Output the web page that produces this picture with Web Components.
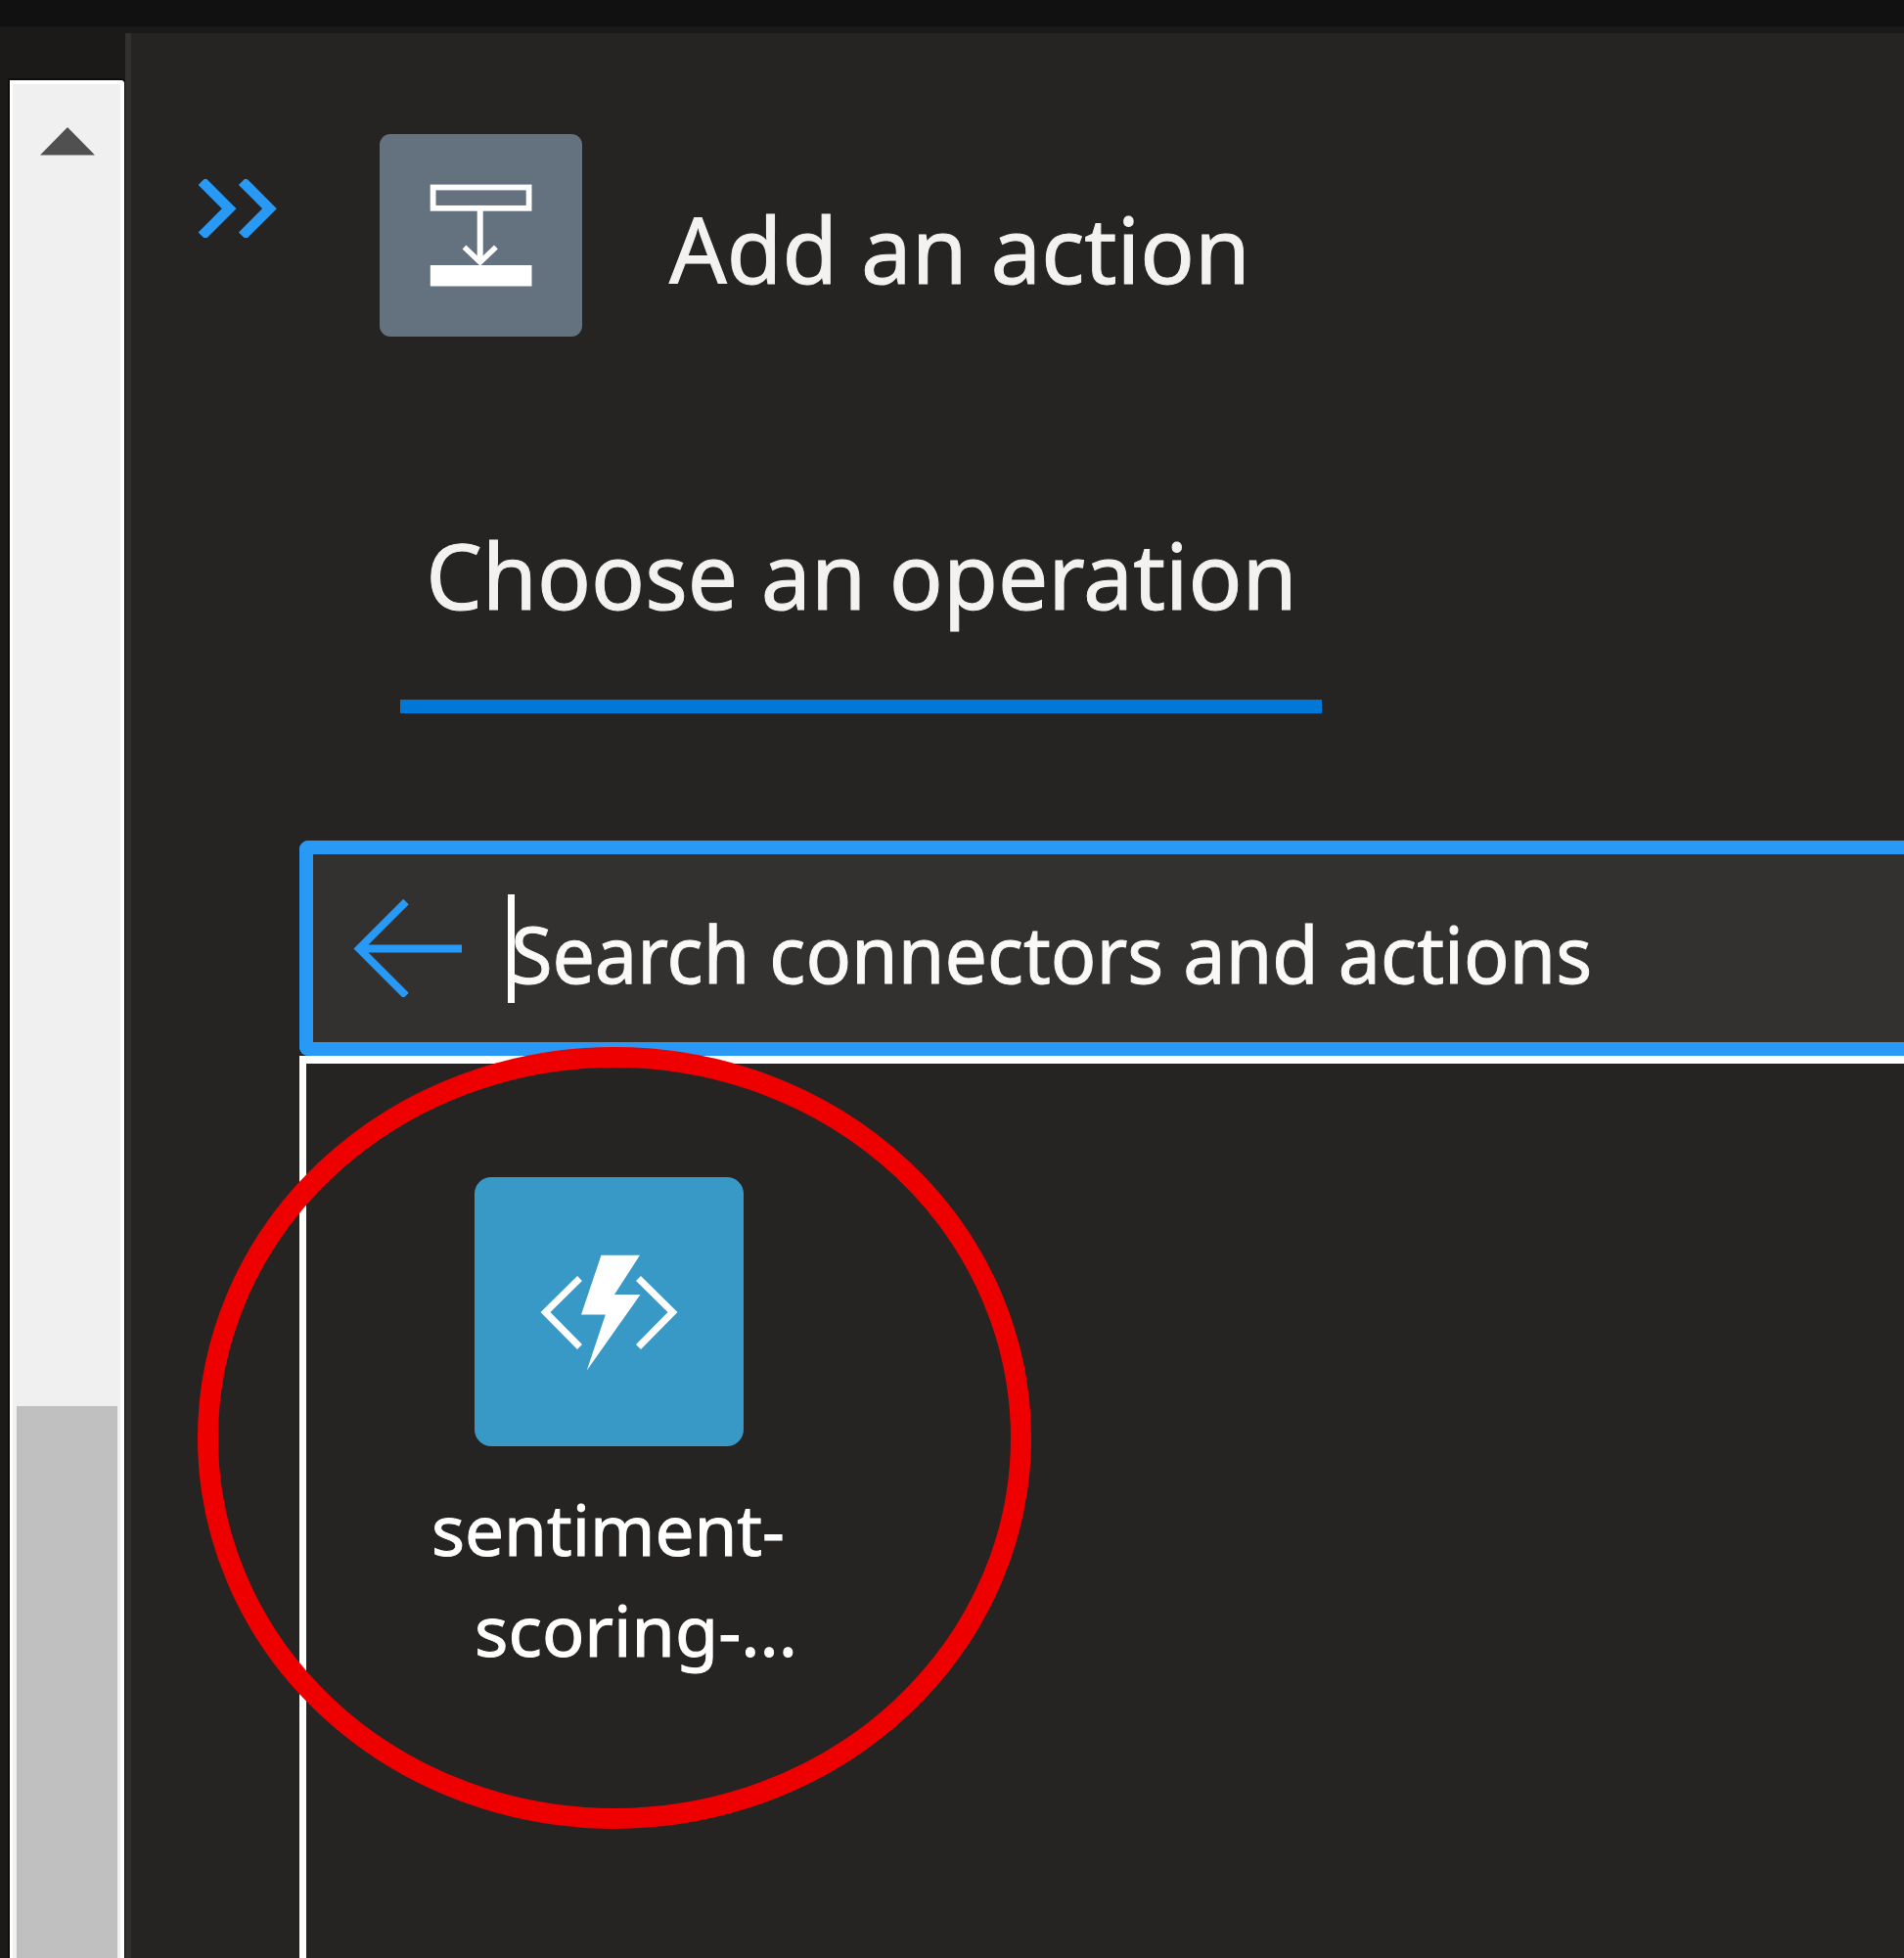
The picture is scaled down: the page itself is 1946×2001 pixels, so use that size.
<!DOCTYPE html>
<html lang="en">
<head>
<meta charset="utf-8">
<title>Add an action</title>
<style>
html,body{margin:0;height:100%;overflow:hidden;background:#1b1a19}
body{font-family:"Noto Sans","Open Sans",sans-serif;color:#f3f2f1}
</style>
</head>
<body>
<designer-shell>
  <scroll-track slot="rail"></scroll-track>
  <action-panel>
    <panel-header slot="header"><fit-text width="587">Add an action</fit-text></panel-header>
    <pivot-tab slot="tabs"><fit-text width="879">Choose an operation</fit-text></pivot-tab>
    <search-field slot="search"><fit-text width="1098">Search connectors and actions</fit-text></search-field>
    <result-list slot="results">
      <connector-tile>
        <fit-text slot="first" width="356">sentiment-</fit-text>
        <fit-text slot="second" width="322">scoring-...</fit-text>
      </connector-tile>
    </result-list>
  </action-panel>
</designer-shell>
<script>
function define(name, html, setup) {
  customElements.define(name, class extends HTMLElement {
    constructor() {
      super();
      this.attachShadow({mode: 'open'}).innerHTML = html;
    }
    connectedCallback() { if (setup) setup(this); }
  });
}

define('designer-shell', `<style>
  :host{display:flex;flex-direction:column;height:2001px;width:1946px;overflow:hidden;background:#1b1a19}
  header{height:27px;flex:none;background:#111}
  main{display:flex;flex:1;min-height:0}
</style><header></header><main><slot name="rail"></slot><slot></slot></main>`);

define('scroll-track', `<style>
  :host{display:flex;flex:none;width:128px;padding:55px 0 0 10px;box-sizing:border-box}
  .track{display:flex;flex-direction:column;align-items:center;width:117px;box-sizing:border-box;background:#f0f0f0;
    border:solid #fff;border-width:4px 4px 0 3px;border-top-right-radius:4px;box-shadow:0 0 0 2px #0e0d0c}
  svg{display:block;flex:none;width:58px;height:29px;margin:44px 0 0 1px}
  .thumb{width:103px;flex:1;margin-top:1278px;background:#c0c0c0}
</style><div class="track">
  <svg viewBox="0 0 58 29"><path d="M29 0L57 28.500H1Z" fill="#505050"/></svg>
  <div class="thumb"></div></div>`);

define('action-panel', `<style>
  :host{display:flex;flex-direction:column;flex:1;min-width:0;margin-top:7px;box-sizing:border-box;
    background:#252423;border-left:6px solid #323130;position:relative}
  .ring{position:absolute;left:68px;top:1036px;width:852px;height:799px}
</style><slot name="header"></slot><slot name="tabs"></slot><slot name="search"></slot><slot name="results"></slot><slot></slot>
<svg class="ring" viewBox="0 0 852 799"><ellipse cx="426" cy="399.500" rx="415.500" ry="389" fill="none" stroke="#ef0000" stroke-width="21"/></svg>`);

define('panel-header', `<style>
  :host{display:flex;align-items:flex-start;flex:none;height:310px;padding:103px 0 0 66px;box-sizing:border-box;font-size:94px;line-height:130px}
  .collapse{width:90px;height:60px;margin-top:46px;flex:none}
  .badge{width:207px;height:207px;margin-left:98px;border-radius:11px;background:#64717f;flex:none}
  .title{margin:52px 0 0 89px}
</style>
<svg class="collapse" viewBox="200 183 90 60" fill="none" stroke="#2899f5" stroke-width="10.400">
  <path d="M206.300 185.300L234.200 213.200L206.300 241.100M247.600 185.300L275.500 213.200L247.600 241.100"/></svg>
<svg class="badge" viewBox="388 137 207 207" fill="none" stroke="#fff">
  <rect x="442.600" y="191.500" width="98" height="21.300" stroke-width="5.800"/>
  <path d="M490.700 213V267" stroke-width="6"/><path d="M474.500 252.500L490.700 268L506.900 252.500" stroke-width="5.500"/>
  <rect x="439.800" y="271" width="103.700" height="21.500" fill="#fff" stroke="none"/></svg>
<div class="title"><slot></slot></div>`);

define('pivot-tab', `<style>
  :host{display:block;flex:none;width:942px;height:385px;margin:0 0 0 275px;padding-top:178px;box-sizing:border-box;font-size:94px;line-height:130px}
  .label{padding-left:31px;height:207px;box-sizing:border-box;border-bottom:14px solid #0078d7}
</style><div class="label"><slot></slot></div>`);

define('search-field', `<style>
  :host{display:flex;flex:none;height:220px;margin:130px 0 0 172px;border:14px solid #2899f5;border-right:0;border-radius:9px 0 0 9px;
    background:#323130;box-sizing:border-box;color:#faf9f8;font-size:80px;line-height:110px;position:relative}
  svg{width:113px;height:100px;margin:46px 0 0 41px;flex:none}
  .text{margin:46px 0 0 52px}
  .caret{position:absolute;left:199px;top:41px;width:7px;height:111px;background:#fff}
</style>
<svg viewBox="361 919 113 100" fill="none" stroke="#2899f5" stroke-width="7.800"><path d="M415 921.500L367 969.500L415 1017.500M367 969.500H472"/></svg>
<div class="text"><slot></slot></div><div class="caret"></div>`);

define('result-list', `<style>
  :host{display:block;flex:1;min-height:0;margin-left:172px;border:solid #fff;border-width:8px 0 0 7px;background:#252423}
</style><slot></slot>`);

define('connector-tile', `<style>
  :host{display:flex;flex-direction:column;width:380px;padding:116px 0 0 130px;font-size:71px;line-height:103px;color:#fff}
  svg{display:block;width:275px;height:275px;margin-left:41.500px;border-radius:17px;background:#3999c6}
  .first{margin:33px 0 0 1px}.second{margin-left:45px}
</style>
<svg viewBox="14.500 13 275 275" fill="none" stroke="#fff" stroke-width="7">
  <path d="M122 116.500L87 151L122 186.500M182 116.500L217 151L182 186.500"/>
  <path d="M144 92.700H183.500L157.500 133H184L129.300 210.500L148.300 153.500H123.500Z" fill="#fff" stroke="none"/></svg>
<div class="first"><slot name="first"></slot></div><div class="second"><slot name="second"></slot></div>`);

/* A single line of text condensed or widened to a given ink width.
   Registered last: the font size comes from the shadow trees around it. */
define('fit-text', `<style>
  :host{display:block;white-space:nowrap;width:max-content;transform-origin:0 0;-webkit-text-stroke:1px currentColor}
</style><slot></slot>`, el => {
  const cs = getComputedStyle(el);
  const ctx = document.createElement('canvas').getContext('2d');
  ctx.font = cs.fontSize + ' ' + cs.fontFamily;
  const m = ctx.measureText(el.textContent.trim());
  const left = -m.actualBoundingBoxLeft;
  const k = Number(el.getAttribute('width')) / (m.actualBoundingBoxRight - left);
  el.style.transform = `scaleX(${k}) translateX(${-left}px)`;
});
</script>
</body>
</html>
